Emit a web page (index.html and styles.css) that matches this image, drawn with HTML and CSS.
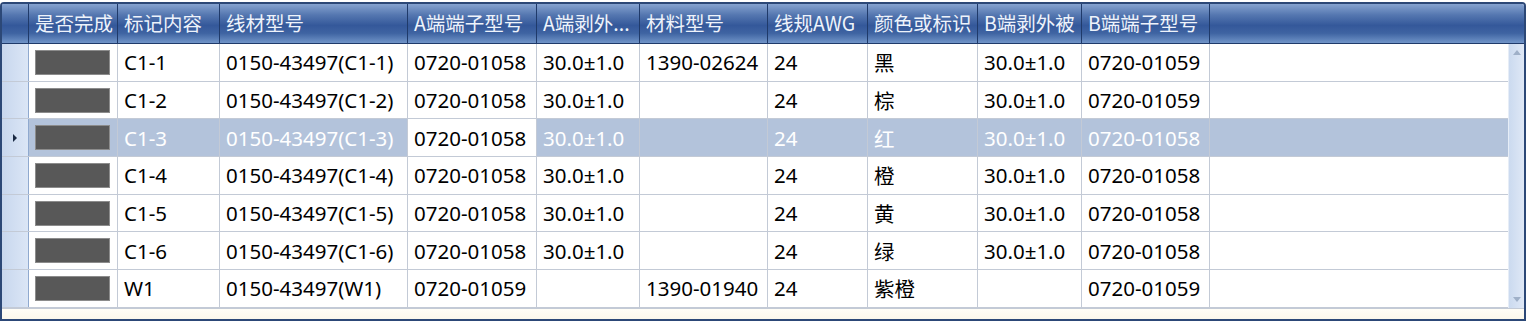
FILE: index.html
```html
<!DOCTYPE html>
<html lang="zh-CN">
<head>
    <meta charset="UTF-8">
    <title>线材清单</title>
    <link rel="stylesheet" href="styles.css">
</head>
<body>
    <div class="grid">
        <div class="head">
            <div class="rh"></div>
            <div class="hc c1">是否完成</div>
            <div class="hc c2">标记内容</div>
            <div class="hc c3">线材型号</div>
            <div class="hc c4">A端端子型号</div>
            <div class="hc c5">A端剥外...</div>
            <div class="hc c6">材料型号</div>
            <div class="hc c7">线规AWG</div>
            <div class="hc c8">颜色或标识</div>
            <div class="hc c9">B端剥外被</div>
            <div class="hc c10">B端端子型号</div>
            <div class="hc fill"></div>
        </div>
        <div class="main">
            <div class="rows">
                <div class="row">
                    <div class="rh"></div>
                    <div class="cell c1"><span class="done"></span></div>
                    <div class="cell c2">C1-1</div>
                    <div class="cell c3">0150-43497(C1-1)</div>
                    <div class="cell c4">0720-01058</div>
                    <div class="cell c5">30.0±1.0</div>
                    <div class="cell c6">1390-02624</div>
                    <div class="cell c7">24</div>
                    <div class="cell c8">黑</div>
                    <div class="cell c9">30.0±1.0</div>
                    <div class="cell c10">0720-01059</div>
                    <div class="cell fill"></div>
                </div>
                <div class="row">
                    <div class="rh"></div>
                    <div class="cell c1"><span class="done"></span></div>
                    <div class="cell c2">C1-2</div>
                    <div class="cell c3">0150-43497(C1-2)</div>
                    <div class="cell c4">0720-01058</div>
                    <div class="cell c5">30.0±1.0</div>
                    <div class="cell c6"></div>
                    <div class="cell c7">24</div>
                    <div class="cell c8">棕</div>
                    <div class="cell c9">30.0±1.0</div>
                    <div class="cell c10">0720-01059</div>
                    <div class="cell fill"></div>
                </div>
                <div class="row selected">
                    <div class="rh"><span class="arrow"></span></div>
                    <div class="cell c1"><span class="done"></span></div>
                    <div class="cell c2">C1-3</div>
                    <div class="cell c3">0150-43497(C1-3)</div>
                    <div class="cell c4 current">0720-01058</div>
                    <div class="cell c5">30.0±1.0</div>
                    <div class="cell c6"></div>
                    <div class="cell c7">24</div>
                    <div class="cell c8">红</div>
                    <div class="cell c9">30.0±1.0</div>
                    <div class="cell c10">0720-01058</div>
                    <div class="cell fill"></div>
                </div>
                <div class="row">
                    <div class="rh"></div>
                    <div class="cell c1"><span class="done"></span></div>
                    <div class="cell c2">C1-4</div>
                    <div class="cell c3">0150-43497(C1-4)</div>
                    <div class="cell c4">0720-01058</div>
                    <div class="cell c5">30.0±1.0</div>
                    <div class="cell c6"></div>
                    <div class="cell c7">24</div>
                    <div class="cell c8">橙</div>
                    <div class="cell c9">30.0±1.0</div>
                    <div class="cell c10">0720-01058</div>
                    <div class="cell fill"></div>
                </div>
                <div class="row">
                    <div class="rh"></div>
                    <div class="cell c1"><span class="done"></span></div>
                    <div class="cell c2">C1-5</div>
                    <div class="cell c3">0150-43497(C1-5)</div>
                    <div class="cell c4">0720-01058</div>
                    <div class="cell c5">30.0±1.0</div>
                    <div class="cell c6"></div>
                    <div class="cell c7">24</div>
                    <div class="cell c8">黄</div>
                    <div class="cell c9">30.0±1.0</div>
                    <div class="cell c10">0720-01058</div>
                    <div class="cell fill"></div>
                </div>
                <div class="row">
                    <div class="rh"></div>
                    <div class="cell c1"><span class="done"></span></div>
                    <div class="cell c2">C1-6</div>
                    <div class="cell c3">0150-43497(C1-6)</div>
                    <div class="cell c4">0720-01058</div>
                    <div class="cell c5">30.0±1.0</div>
                    <div class="cell c6"></div>
                    <div class="cell c7">24</div>
                    <div class="cell c8">绿</div>
                    <div class="cell c9">30.0±1.0</div>
                    <div class="cell c10">0720-01058</div>
                    <div class="cell fill"></div>
                </div>
                <div class="row">
                    <div class="rh"></div>
                    <div class="cell c1"><span class="done"></span></div>
                    <div class="cell c2">W1</div>
                    <div class="cell c3">0150-43497(W1)</div>
                    <div class="cell c4">0720-01059</div>
                    <div class="cell c5"></div>
                    <div class="cell c6">1390-01940</div>
                    <div class="cell c7">24</div>
                    <div class="cell c8">紫橙</div>
                    <div class="cell c9"></div>
                    <div class="cell c10">0720-01059</div>
                    <div class="cell fill"></div>
                </div>
            </div>
            <div class="vscroll">
                <span class="up"></span>
                <span class="down"></span>
            </div>
        </div>
        <div class="foot"></div>
    </div>
</body>
</html>
```

FILE: styles.css
```css
/* data grid */
body {
    margin: 0;
    padding: 0;
    background: #ffffff;
    font-family: "Noto Sans", "Noto Sans CJK SC", sans-serif;
}

.grid {
    margin-top: 2px;
    width: 1522px;
    height: 315px;
    border: 2px solid #2c4877;
    border-radius: 4px 4px 0 0;
    background: #ffffff;
    display: flex;
    flex-direction: column;
    overflow: hidden;
}

.head {
    display: flex;
    height: 39px;
    flex-shrink: 0;
    border-bottom: 1px solid #1f3a6a;
    background: linear-gradient(#86a3d0 0%, #5577b0 28%, #34589a 55%, #3f64a2 75%, #7094c8 100%);
}

.rh {
    width: 26px;
    flex-shrink: 0;
    border-right: 1px solid #8fa9cf;
    background: linear-gradient(90deg, #c8d7ee, #dbe6f6);
    display: flex;
    align-items: center;
    justify-content: center;
}

.head .rh {
    background: linear-gradient(#86a3d0 0%, #5577b0 28%, #34589a 55%, #3f64a2 75%, #7094c8 100%);
    border-right: 1px solid #1f3a6a;
}

.hc {
    box-sizing: border-box;
    border-right: 1px solid #1f3a6a;
    color: #eef3fb;
    font-family: "Noto Sans CJK SC", sans-serif;
    font-size: 19.5px;
    line-height: 38px;
    padding-left: 6px;
    white-space: nowrap;
    overflow: hidden;
}

.hc.fill {
    flex: 1;
    border-right: none;
}

.c1 { width: 89px; }
.c2 { width: 102px; }
.c3 { width: 188px; }
.c4 { width: 129px; }
.c5 { width: 103px; }
.c6 { width: 128px; }
.c7 { width: 100px; }
.c8 { width: 110px; }
.c9 { width: 104px; }
.c10 { width: 128px; }

.main {
    display: flex;
    flex: 1;
}

.rows {
    flex: 1;
    display: flex;
    flex-direction: column;
}

.row {
    display: flex;
    height: 37.7px;
    box-sizing: border-box;
    border-bottom: 1px solid #c3cad6;
}

.cell {
    box-sizing: border-box;
    border-right: 1px solid #c3cad6;
    font-size: 20.5px;
    color: #000000;
    padding-left: 6px;
    display: flex;
    align-items: center;
    white-space: nowrap;
    overflow: hidden;
}

.cell.fill {
    flex: 1;
    border-right: none;
}

.done {
    display: block;
    width: 75px;
    height: 25px;
    box-sizing: border-box;
    margin-left: 0;
    background: #585858;
    border: 1px solid #8c8c8c;
}

.row.selected .cell {
    background: #b3c3db;
    color: #ffffff;
}

.row.selected .cell.current {
    background: #ffffff;
    color: #000000;
}

.row.selected .cell.fill {
    background: #b3c3db;
}

.arrow {
    width: 0;
    height: 0;
    border-top: 4px solid transparent;
    border-bottom: 4px solid transparent;
    border-left: 4px solid #1a2a44;
}

.vscroll {
    width: 15px;
    flex-shrink: 0;
    background: linear-gradient(90deg, #cbdaef, #dfe8f6);
    border-left: 1px solid #e6edf7;
    display: flex;
    flex-direction: column;
    justify-content: space-between;
    align-items: center;
    padding: 6px 0;
}

.up,
.down {
    width: 0;
    height: 0;
    border-left: 4px solid transparent;
    border-right: 4px solid transparent;
}

.up {
    border-bottom: 5px solid #9fb0c8;
}

.down {
    border-top: 5px solid #9fb0c8;
}

.foot {
    height: 11px;
    flex-shrink: 0;
    border-top: 1px solid #c3cad6;
    background: linear-gradient(#fffdf6, #fbf7ea);
}
```
